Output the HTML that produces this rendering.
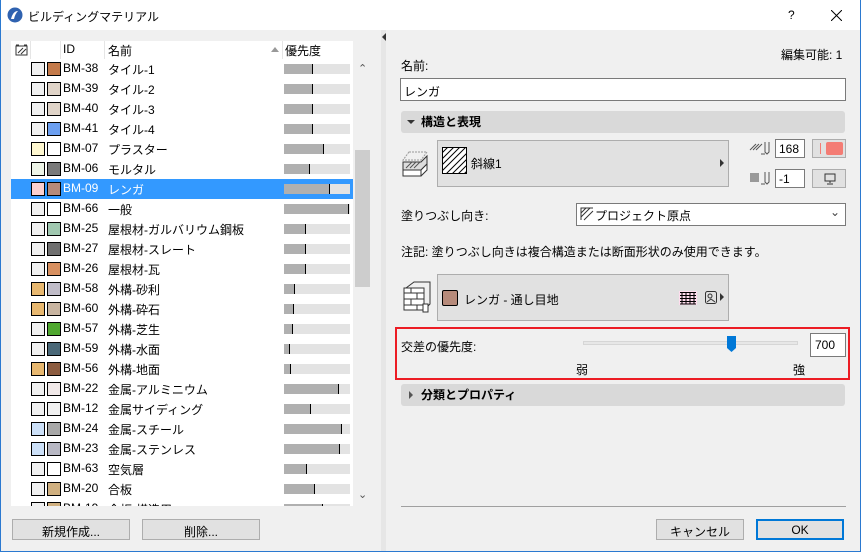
<!DOCTYPE html>
<html><head><meta charset="utf-8"><style>
*{box-sizing:border-box;margin:0;padding:0}
body{width:861px;height:552px;position:relative;overflow:hidden;background:#f0f0f0;font-family:"Liberation Sans","Noto Sans CJK JP",sans-serif;font-size:12px;color:#000}
.a{position:absolute}
.win{left:0;top:0;width:861px;height:552px;border:1px solid #2b79d0;border-top:none}
.row{position:absolute;left:11px;width:342px;height:20px}
.row span{position:absolute;top:2px}
.sw{position:absolute;top:3px;width:14px;height:14px;border:1px solid #000}
.bar{position:absolute;left:273px;top:5px;width:66px;height:10px;background:#e3e3e3}
.bar i{position:absolute;left:0;top:0;height:10px;background:#b0b0b0;border-right:1px solid #000}
.btn{position:absolute;background:#e1e1e1;border:1px solid #adadad;text-align:center}
.inp{position:absolute;background:#fff;border:1px solid #7a7a7a}
.sec{position:absolute;left:401px;width:444px;height:22px;background:#d9d9d9;border-radius:3px;font-weight:bold;padding:2px 0 0 20px}
</style></head><body>
<div class="a" style="left:0;top:0;width:861px;height:30px;background:#fff"></div>
<svg class="a" style="left:7px;top:7px" width="16" height="16"><circle cx="8" cy="8" r="7.5" fill="#2f62b0"/><path d="M4 12 Q6 4 11 4 Q8 7 7 12Z" fill="#fff"/></svg>
<div class="a" style="left:28px;top:8px">ビルディングマテリアル</div>
<div class="a" style="left:788px;top:8px">?</div>
<svg class="a" style="left:831px;top:10px" width="11" height="11"><path d="M0 0L11 11M11 0L0 11" stroke="#000" stroke-width="1"/></svg>

<div class="a" style="left:381px;top:30px;width:5px;height:522px;background:#e6e6e6"></div>
<div class="a" style="left:382px;top:33px;width:0;height:0;border-top:4px solid transparent;border-bottom:4px solid transparent;border-right:4px solid #333"></div>

<div class="a" style="left:11px;top:41px;width:342px;height:465px;background:#fff;overflow:hidden">
<div class="a" style="left:19px;top:0;width:1px;height:18px;background:#e5e5e5"></div>
<div class="a" style="left:49px;top:0;width:1px;height:18px;background:#e5e5e5"></div>
<div class="a" style="left:93px;top:0;width:1px;height:18px;background:#e5e5e5"></div>
<div class="a" style="left:271px;top:0;width:1px;height:18px;background:#e5e5e5"></div>
<svg class="a" style="left:4px;top:3px" width="13" height="12"><rect x="1" y="2" width="11" height="9" fill="none" stroke="#333"/><path d="M1 1h3M9 1h3M3 9l5-5M6 10l5-5" stroke="#333"/></svg>
<div class="a" style="left:52px;top:1px">ID</div>
<div class="a" style="left:97px;top:1px">名前</div>
<div class="a" style="left:260px;top:6px;border-left:4px solid transparent;border-right:4px solid transparent;border-bottom:5px solid #999"></div>
<div class="a" style="left:274px;top:1px">優先度</div>
</div>
<div id="rows"></div>
<div class="a" style="left:355px;top:59px;width:15px;height:447px;background:#f0f0f0"></div>
<div class="a" style="left:355px;top:150px;width:15px;height:137px;background:#cdcdcd"></div>
<div class="a" style="left:358px;top:62px;font-size:11px;color:#555">&#x2303;</div>
<div class="a" style="left:358px;top:488px;font-size:11px;color:#555">&#x2304;</div>

<div class="btn" style="left:12px;top:519px;width:118px;height:21px;padding-top:3px">新規作成...</div>
<div class="btn" style="left:142px;top:519px;width:118px;height:21px;padding-top:3px">削除...</div>

<div class="a" style="left:781px;top:46px">編集可能: 1</div>
<div class="a" style="left:401px;top:57px">名前:</div>
<div class="inp" style="left:400px;top:78px;width:446px;height:23px;padding:4px 3px">レンガ</div>
<div class="sec" style="top:111px">構造と表現</div>
<div class="a" style="left:407px;top:120px;border-left:4px solid transparent;border-right:4px solid transparent;border-top:4px solid #333"></div>

<svg class="a" style="left:401px;top:148px" width="30" height="32"><path d="M8 4h18l-6 8H2z" fill="none" stroke="#999" stroke-dasharray="2 1"/><path d="M2 14h18l6-6v8l-6 6H2z" fill="#ddd" stroke="#333"/><path d="M2 22h18v6H2zM20 22l6-6v6l-6 6" fill="#fff" stroke="#333"/><path d="M5 20l6-6M9 20l6-6M13 20l6-6" stroke="#555"/></svg>
<div class="btn" style="left:437px;top:140px;width:292px;height:47px"></div>
<svg class="a" style="left:442px;top:147px" width="25" height="27"><rect x="0.5" y="0.5" width="24" height="26" fill="#fff" stroke="#000"/><path d="M0 6l6-6M0 12l12-12M0 18l18-18M0 24l24-24M4 27l21-21M10 27l15-15M16 27l9-9M22 27l3-3" stroke="#000"/></svg>
<div class="a" style="left:471px;top:155px">斜線1</div>
<div class="a" style="left:720px;top:159px;border-top:4px solid transparent;border-bottom:4px solid transparent;border-left:4px solid #333"></div>

<svg class="a" style="left:749px;top:140px" width="24" height="18"><path d="M1 10l6-6M4 10l6-6M7 10l6-6M12 14h4M16 2v10l2 2 2-2V2" stroke="#555" fill="none"/></svg>
<div class="inp" style="left:775px;top:139px;width:30px;height:19px;padding:2px 3px">168</div>
<div class="btn" style="left:812px;top:139px;width:34px;height:19px"><div class="a" style="left:7px;top:3px;width:1px;height:11px;background:#f47c74"></div><div class="a" style="left:13px;top:2px;width:17px;height:13px;background:#f47c74;border-radius:2px"></div></div>
<svg class="a" style="left:749px;top:170px" width="24" height="18"><rect x="1" y="3" width="9" height="9" fill="#999"/><path d="M12 14h4M16 2v10l2 2 2-2V2" stroke="#555" fill="none"/></svg>
<div class="inp" style="left:775px;top:169px;width:30px;height:19px;padding:2px 3px">-1</div>
<div class="btn" style="left:812px;top:169px;width:34px;height:19px"><svg class="a" style="left:11px;top:3px" width="12" height="12"><rect x="1" y="1" width="10" height="7" fill="none" stroke="#333"/><path d="M6 8v2M3 11h6" stroke="#333"/></svg></div>

<div class="a" style="left:401px;top:207px">塗りつぶし向き:</div>
<div class="inp" style="left:576px;top:203px;width:270px;height:23px"></div>
<svg class="a" style="left:580px;top:207px" width="14" height="14"><path d="M1 13V1h12M1 6l5-5M1 10l9-9M4 13l9-9" stroke="#333" fill="none"/></svg>
<div class="a" style="left:595px;top:207px">プロジェクト原点</div>
<div class="a" style="left:830px;top:205px;color:#444">&#x2304;</div>
<div class="a" style="left:401px;top:243px">注記: 塗りつぶし向きは複合構造または断面形状のみ使用できます。</div>

<svg class="a" style="left:402px;top:280px" width="30" height="34"><path d="M4 8l8-6h16v22l-6 6" fill="none" stroke="#333"/><rect x="2" y="8" width="20" height="22" fill="#fff" stroke="#333"/><path d="M2 13h20M2 19h20M2 25h20M9 8v5M15 13v6M9 19v6M15 25v5" stroke="#333"/><rect x="21" y="24" width="5" height="8" fill="#fff" stroke="#333"/></svg>
<div class="btn" style="left:437px;top:274px;width:292px;height:47px"></div>
<div class="a" style="left:442px;top:290px;width:16px;height:16px;background:#b68a7a;border:1px solid #000;border-radius:2px"></div>
<div class="a" style="left:464px;top:291px">レンガ - 通し目地</div>
<svg class="a" style="left:679px;top:291px" width="18" height="14"><rect x="0" y="0" width="18" height="14" fill="#fde"/><path d="M1 1.5h16M1 4.5h16M1 7.5h16M1 10.5h16M1 13h16M3 1v12M7 1v12M11 1v12M15 1v12" stroke="#000"/></svg>
<svg class="a" style="left:705px;top:291px" width="12" height="13"><rect x="0.5" y="0.5" width="11" height="12" rx="2" fill="none" stroke="#333"/><circle cx="5" cy="5" r="2" fill="none" stroke="#333"/><path d="M2 11l4-3 4 3" stroke="#333" fill="none"/></svg>
<div class="a" style="left:720px;top:293px;border-top:4px solid transparent;border-bottom:4px solid transparent;border-left:4px solid #333"></div>

<div class="a" style="left:395px;top:327px;width:455px;height:53px;border:2px solid #ec1c24"></div>
<div class="a" style="left:401px;top:338px">交差の優先度:</div>
<div class="a" style="left:583px;top:341px;width:215px;height:4px;background:#e7e7e7;border:1px solid #d6d6d6"></div>
<svg class="a" style="left:727px;top:336px" width="9" height="16"><path d="M0 0h9v12l-4.5 4L0 12z" fill="#0078d7"/></svg>
<div class="inp" style="left:810px;top:333px;width:36px;height:24px;padding:4px 4px">700</div>
<div class="a" style="left:576px;top:361px">弱</div>
<div class="a" style="left:793px;top:361px">強</div>

<div class="sec" style="top:384px">分類とプロパティ</div>
<div class="a" style="left:409px;top:391px;border-top:4px solid transparent;border-bottom:4px solid transparent;border-left:4px solid #555"></div>

<div class="a" style="left:401px;top:506px;width:445px;height:1px;background:#a0a0a0"></div>
<div class="btn" style="left:656px;top:519px;width:88px;height:21px;padding-top:3px">キャンセル</div>
<div class="btn" style="left:756px;top:519px;width:88px;height:21px;padding-top:2px;border:2px solid #0078d7">OK</div>

<div class="a win"></div>
<script>
var d=[["BM-38","タイル-1","","#c47a4a",313],["BM-39","タイル-2","","#e0d4c8",313],["BM-40","タイル-3","","#e0d4c8",313],["BM-41","タイル-4","","#6c9ff0",313],["BM-07","プラスター","#fff8d0","#fff",324],["BM-06","モルタル","#eef5e8","#7a7a7a",310],["BM-09","レンガ","#fcd0d0","#b68a7a",330],["BM-66","一般","","#fff",349],["BM-25","屋根材-ガルバリウム鋼板","","#a0c8b0",306],["BM-27","屋根材-スレート","","#707070",306],["BM-26","屋根材-瓦","","#d89060",306],["BM-58","外構-砂利","#e8b870","#c0bcc8",295],["BM-60","外構-砕石","#e8b870","#c8b4a0",294],["BM-57","外構-芝生","","#50a830",293],["BM-59","外構-水面","","#4a6878",290],["BM-56","外構-地面","#e8b870","#8c5c40",291],["BM-22","金属-アルミニウム","","#f0e8e8",339],["BM-12","金属サイディング","","#f0f0f0",311],["BM-24","金属-スチール","#cce0f8","#a8a8a8",342],["BM-23","金属-ステンレス","#cce0f8","#b8b8c4",340],["BM-63","空気層","","#fff",307],["BM-20","合板","","#d0b080",315],["BM-19","合板-構造用","","#d0b080",323]];
var h="";d.forEach(function(r,i){var t=59+20*i,sel=i==6;var hgt=Math.min(20,506-t);
h+='<div class="row" style="top:'+t+'px;height:'+hgt+'px;overflow:hidden;'+(sel?'background:#3399ff;color:#fff':'')+'">'+
'<div class="sw" style="left:20px;background:'+(r[2]||'#f0f0f0')+'"></div><div class="sw" style="left:36px;background:'+r[3]+'"></div>'+
'<span style="left:52px">'+r[0]+'</span><span style="left:97px">'+r[1]+'</span><div class="bar"><i style="width:'+(r[4]-284)+'px"></i></div></div>';});
document.getElementById("rows").innerHTML=h;
</script>
</body></html>
